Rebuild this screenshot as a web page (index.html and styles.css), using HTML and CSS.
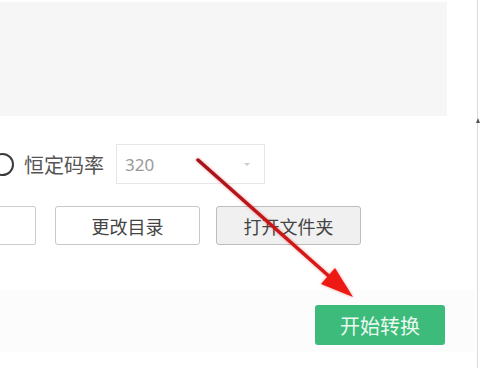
FILE: index.html
```html
<!DOCTYPE html>
<html lang="zh-CN">

<head>
    <meta charset="UTF-8">
    <meta name="viewport" content="width=device-width, initial-scale=1.0">
    <title>转换设置</title>
    <link rel="stylesheet" href="styles.css">
</head>

<body>
    <div class="page">
        <div class="preview"></div>

        <div class="row bitrate-row">
            <span class="radio"></span>
            <span class="radio-label">恒定码率</span>
            <div class="select">
                <span class="select-value">320</span>
                <span class="caret"></span>
            </div>
        </div>

        <div class="row dir-row">
            <div class="path-input"></div>
            <button class="btn">更改目录</button>
            <button class="btn btn-gray">打开文件夹</button>
        </div>

        <div class="footer">
            <button class="btn-start">开始转换</button>
        </div>

        <div class="scrollbar"><span class="scroll-up"></span></div>

        <svg class="annot" width="480" height="368" viewBox="0 0 480 368">
            <defs>
                <linearGradient id="arrow-grad" x1="197" y1="160" x2="352" y2="296" gradientUnits="userSpaceOnUse">
                    <stop offset="0" stop-color="#a3141c" />
                    <stop offset="1" stop-color="#ea1a14" />
                </linearGradient>
            </defs>
            <line x1="198" y1="160" x2="331" y2="278" stroke="url(#arrow-grad)" stroke-width="3.5" stroke-linecap="round" />
            <polygon points="353,297 321,284 335,268" fill="#ec1a12" />
        </svg>
    </div>
</body>

</html>
```

FILE: styles.css
```css
body {
    margin: 0;
    background-color: #fff;
    font-family: "Noto Sans CJK SC", "Liberation Sans", sans-serif;
    overflow: hidden;
}

.page {
    position: relative;
    width: 480px;
    height: 368px;
    overflow: hidden;
}

.preview {
    margin-top: 2px;
    width: 447px;
    height: 114px;
    background-color: #f6f6f6;
}

.row {
    display: flex;
    align-items: center;
}

.bitrate-row {
    margin-top: 28px;
    height: 40px;
}

.radio {
    box-sizing: border-box;
    width: 23px;
    height: 23px;
    margin-left: -9px;
    border: 2px solid #3a3a3a;
    border-radius: 50%;
    background-color: #fff;
}

.radio-label {
    margin-left: 10px;
    font-size: 20px;
    color: #555;
}

.select {
    box-sizing: border-box;
    display: flex;
    align-items: center;
    justify-content: space-between;
    width: 149px;
    height: 40px;
    margin-left: 12px;
    padding: 0 14px 0 8px;
    border: 1px solid #e6e6e6;
}

.select-value {
    font-family: "Noto Sans", "Liberation Sans", sans-serif;
    font-size: 17px;
    color: #9a9a9a;
}

.caret {
    width: 0;
    height: 0;
    border-left: 3px solid transparent;
    border-right: 3px solid transparent;
    border-top: 3px solid #ccc;
}

.dir-row {
    margin-top: 22px;
    height: 39px;
}

.path-input {
    box-sizing: border-box;
    width: 46px;
    height: 39px;
    margin-left: -10px;
    border: 1px solid #ccc;
    border-radius: 2px;
}

.btn {
    box-sizing: border-box;
    width: 145px;
    height: 39px;
    margin-left: 19px;
    border: 1px solid #c8c8c8;
    border-radius: 3px;
    background-color: #fff;
    font-family: inherit;
    font-size: 18px;
    color: #444;
    padding: 0;
}

.btn-gray {
    margin-left: 16px;
    border-color: #bdbdbd;
    background-color: #f0f0f0;
}

.footer {
    display: flex;
    justify-content: flex-end;
    box-sizing: border-box;
    width: 475px;
    height: 62px;
    margin-top: 45px;
    padding: 15px 30px 0 0;
    background-color: #fcfcfc;
}

.btn-start {
    width: 130px;
    height: 40px;
    border: none;
    border-radius: 3px;
    background-color: #3cbb7b;
    font-family: inherit;
    font-size: 20px;
    color: #eaf8ef;
    padding: 0;
}

.scrollbar {
    position: absolute;
    top: 0;
    left: 477px;
    width: 1px;
    height: 368px;
    background-color: #dcdcdc;
}

.scroll-up {
    position: absolute;
    top: 118px;
    left: -1px;
    width: 0;
    height: 0;
    border-left: 2px solid transparent;
    border-right: 2px solid transparent;
    border-bottom: 5px solid #555;
}

.annot {
    position: absolute;
    top: 0;
    left: 0;
    pointer-events: none;
    filter: drop-shadow(0 0 1.5px rgba(220, 30, 30, 0.45));
}
```
